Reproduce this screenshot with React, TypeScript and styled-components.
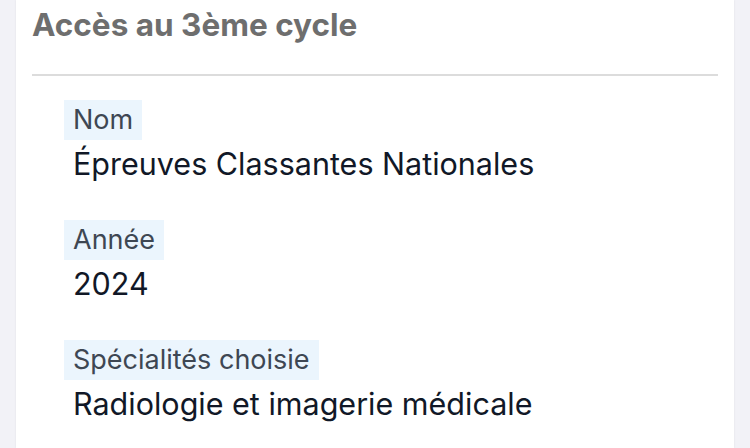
import React from 'react';
import styled, { createGlobalStyle } from 'styled-components';

const GlobalStyle = createGlobalStyle`
  html, body {
    margin: 0;
    padding: 0;
    background: #f2f2f7;
    font-family: Inter, "Liberation Sans", sans-serif;
    overflow: hidden;
  }
`;

// la carte blanche
const Page = styled.div`
  height: 448px;
  padding: 0 16px;
`;

const Card = styled.section`
  background: #ffffff;
  height: 100%;
  padding: 0 16px;
  box-shadow: 0 0 2px rgba(0, 0, 0, 0.08);
`;

const Title = styled.h2`
  margin: 0;
  padding-top: 5px;
  height: 76px;
  line-height: 40px;
  font-size: 31.5px;
  font-weight: 700;
  color: #6e6e6e;
  border-bottom: 2px solid #dcdcdc;
  box-sizing: border-box;
`;

const Fields = styled.dl`
  margin: 0;
  padding: 24px 0 0 32px;
  display: flex;
  flex-direction: column;
  gap: 32px;
`;

const Field = styled.div`
  display: flex;
  flex-direction: column;
  align-items: flex-start;
`;

const Label = styled.dt`
  background: #ebf5fd;
  color: #3e4753;
  font-size: 27px;
  line-height: 40px;
  padding: 0 9px;
`;

const Value = styled.dd`
  margin: 0;
  color: #111827;
  font-size: 30.5px;
  line-height: 48px;
  padding-left: 9px;
`;

interface Item {
  label: string;
  value: string;
}

const items: Item[] = [
  { label: 'Nom', value: 'Épreuves Classantes Nationales' },
  { label: 'Année', value: '2024' },
  { label: 'Spécialités choisie', value: 'Radiologie et imagerie médicale' },
];

const App: React.FC = () => {
  return (
    <Page>
      <GlobalStyle />
      <Card>
        <Title>Accès au 3ème cycle</Title>
        <Fields>
          {items.map((item) => (
            <Field key={item.label}>
              <Label>{item.label}</Label>
              <Value>{item.value}</Value>
            </Field>
          ))}
        </Fields>
      </Card>
    </Page>
  );
};

export default App;
